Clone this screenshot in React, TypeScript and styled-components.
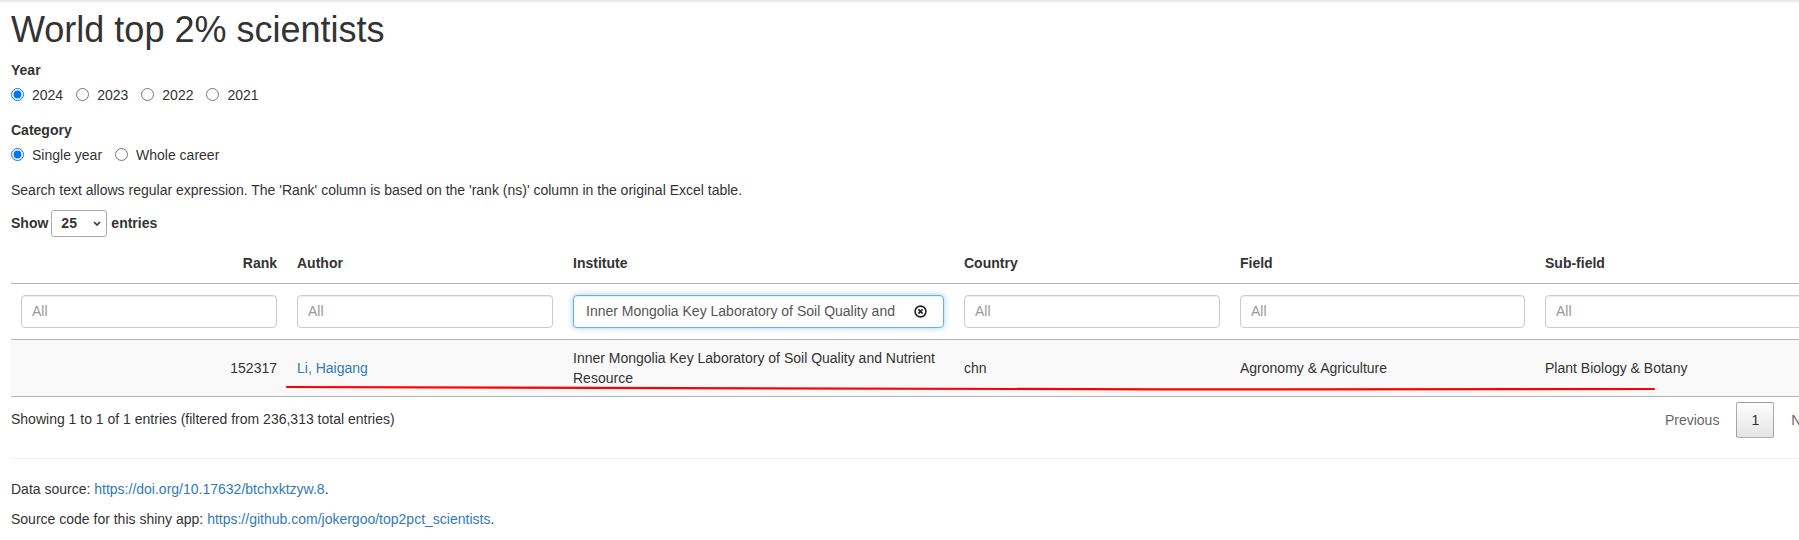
import styled, { createGlobalStyle } from "styled-components";

const GlobalStyle = createGlobalStyle`
  html, body {
    margin: 0;
    padding: 0;
    overflow: hidden;
  }

  body {
    font-family: "Liberation Sans", Arial, Helvetica, sans-serif;
    font-size: 14px;
    line-height: 20px;
    color: #333;
    background: #fff linear-gradient(#e6e6e6, #fff 4px) no-repeat;
  }
`;

const Page = styled.div`
  position: relative;
  width: 1824px;
  padding: 10px 0 0 11px;
`;

const Title = styled.h1`
  margin: 0 0 10px;
  font-size: 36px;
  font-weight: 500;
  line-height: 1.1;
`;

const FormGroup = styled.div`
  margin-bottom: 15px;
`;

const FieldLabel = styled.div`
  font-weight: bold;
  margin-bottom: 5px;
`;

const RadioRow = styled.div`
  display: flex;
  gap: 13px;
  height: 20px;
`;

const RadioOption = styled.label`
  display: inline-flex;
  align-items: center;
  gap: 8px;
`;

const RadioInput = styled.input`
  margin: 0;
  width: 13px;
  height: 13px;
`;

const Note = styled.p`
  margin: 0 0 10px;
`;

const LengthRow = styled.div`
  display: flex;
  align-items: center;
  height: 27px;
  margin-bottom: 6px;
  font-weight: bold;
`;

const SelectBox = styled.div`
  box-sizing: border-box;
  width: 56px;
  height: 27px;
  margin: 0 4px 0 3px;
  padding: 0 5px 0 9px;
  display: flex;
  align-items: center;
  justify-content: space-between;
  border: 1px solid #aaa;
  border-radius: 3px;
`;

const Table = styled.table`
  width: 1824px;
  border-collapse: collapse;
  table-layout: fixed;
`;

const HeadCell = styled.th<{ $align?: string }>`
  padding: 10px;
  text-align: ${(p) => p.$align || "left"};
  font-weight: bold;
  vertical-align: bottom;
  border-bottom: 1px solid #b3b3b3;
`;

const FilterCell = styled.td`
  padding: 11px 10px;
  border-bottom: 1px solid #b3b3b3;
`;

const FilterWrap = styled.div`
  position: relative;
`;

const FilterInput = styled.input<{ $focused?: boolean }>`
  box-sizing: border-box;
  display: block;
  width: 100%;
  height: 33px;
  margin: 0;
  padding: 0 30px 0 ${(p) => (p.$focused ? "12px" : "10px")};
  font-family: "Liberation Sans", Arial, sans-serif;
  font-size: 14px;
  color: #555;
  background: #fff;
  border: 1px solid ${(p) => (p.$focused ? "#66afe9" : "#ccc")};
  border-radius: 4px;
  outline: none;
  box-shadow: ${(p) =>
    p.$focused
      ? "inset 0 1px 1px rgba(0,0,0,.075), 0 0 6px rgba(102,175,233,.6)"
      : "inset 0 1px 1px rgba(0,0,0,.075)"};

  &::placeholder {
    color: #999;
  }
`;

const ClearIcon = styled.svg`
  position: absolute;
  right: 17px;
  top: 10px;
`;

const DataRow = styled.tr`
  background: #f9f9f9;
`;

const Cell = styled.td<{ $align?: string }>`
  padding: 8px 10px;
  vertical-align: middle;
  text-align: ${(p) => p.$align || "left"};
  border-bottom: 1px solid #b3b3b3;
`;

const Link = styled.a`
  color: #337ab7;
  text-decoration: none;
`;

const TableFooter = styled.div`
  display: flex;
  justify-content: space-between;
  align-items: flex-start;
`;

const Info = styled.div`
  padding-top: 12px;
`;

const Paging = styled.div`
  display: flex;
  padding-top: 5px;
`;

const PageButton = styled.span<{ $current?: boolean; $disabled?: boolean }>`
  box-sizing: border-box;
  min-width: 21px;
  margin-left: 2px;
  padding: 7px 14px;
  text-align: center;
  border: 1px solid ${(p) => (p.$current ? "rgba(0,0,0,0.3)" : "transparent")};
  border-radius: 2px;
  color: ${(p) => (p.$disabled ? "#666" : "#333")};
  background: ${(p) =>
    p.$current
      ? "linear-gradient(to bottom, #fdfdfd 0%, #e4e4e4 100%)"
      : "transparent"};
`;

const Rule = styled.hr`
  margin: 20px 0;
  border: 0;
  border-top: 1px solid #eee;
`;

const FooterText = styled.p`
  margin: 0 0 10px;
`;

const Annotation = styled.svg`
  position: absolute;
  left: 0;
  top: 0;
  pointer-events: none;
`;

const columns = [
  { key: "rank", title: "Rank", width: 276, align: "right" },
  { key: "author", title: "Author", width: 276 },
  { key: "institute", title: "Institute", width: 391 },
  { key: "country", title: "Country", width: 276 },
  { key: "field", title: "Field", width: 305 },
  { key: "subfield", title: "Sub-field", width: 300 },
];

const searchValue = "Inner Mongolia Key Laboratory of Soil Quality and";

function Radio({ label, checked }: { label: string; checked?: boolean }) {
  return (
    <RadioOption>
      <RadioInput type="radio" defaultChecked={checked} readOnly />
      <span>{label}</span>
    </RadioOption>
  );
}

const App: React.FC = () => {
  return (
    <Page>
      <GlobalStyle />
      <Title>World top 2% scientists</Title>

      <FormGroup>
        <FieldLabel>Year</FieldLabel>
        <RadioRow>
          <Radio label="2024" checked />
          <Radio label="2023" />
          <Radio label="2022" />
          <Radio label="2021" />
        </RadioRow>
      </FormGroup>

      <FormGroup>
        <FieldLabel>Category</FieldLabel>
        <RadioRow>
          <Radio label="Single year" checked />
          <Radio label="Whole career" />
        </RadioRow>
      </FormGroup>

      <Note>
        Search text allows regular expression. The 'Rank' column is based on
        the 'rank (ns)' column in the original Excel table.
      </Note>

      <LengthRow>
        Show
        <SelectBox>
          <span>25</span>
          <svg width="8" height="5" viewBox="0 0 8 5">
            <path d="M1 1 L4 4 L7 1" fill="none" stroke="#333" strokeWidth="1.6" />
          </svg>
        </SelectBox>
        entries
      </LengthRow>

      <Table>
        <colgroup>
          {columns.map((c) => (
            <col key={c.key} style={{ width: c.width }} />
          ))}
        </colgroup>
        <thead>
          <tr>
            {columns.map((c) => (
              <HeadCell key={c.key} $align={c.align}>
                {c.title}
              </HeadCell>
            ))}
          </tr>
          <tr>
            {columns.map((c) =>
              c.key === "institute" ? (
                <FilterCell key={c.key}>
                  <FilterWrap>
                    <FilterInput $focused defaultValue={searchValue} />
                    <ClearIcon width="13" height="13" viewBox="0 0 13 13">
                      <circle cx="6.5" cy="6.5" r="5.4" fill="none" stroke="#222" strokeWidth="1.6" />
                      <path d="M4.4 4.4 L8.6 8.6 M8.6 4.4 L4.4 8.6" stroke="#222" strokeWidth="1.6" />
                    </ClearIcon>
                  </FilterWrap>
                </FilterCell>
              ) : (
                <FilterCell key={c.key}>
                  <FilterInput placeholder="All" />
                </FilterCell>
              )
            )}
          </tr>
        </thead>
        <tbody>
          <DataRow>
            <Cell $align="right">152317</Cell>
            <Cell>
              <Link href="#">Li, Haigang</Link>
            </Cell>
            <Cell>
              Inner Mongolia Key Laboratory of Soil Quality and Nutrient
              Resource
            </Cell>
            <Cell>chn</Cell>
            <Cell>Agronomy &amp; Agriculture</Cell>
            <Cell>Plant Biology &amp; Botany</Cell>
          </DataRow>
        </tbody>
      </Table>

      <TableFooter>
        <Info>Showing 1 to 1 of 1 entries (filtered from 236,313 total entries)</Info>
        <Paging>
          <PageButton $disabled>Previous</PageButton>
          <PageButton $current>1</PageButton>
          <PageButton $disabled>Next</PageButton>
        </Paging>
      </TableFooter>

      <Rule />

      <FooterText>
        Data source:{" "}
        <Link href="#">https://doi.org/10.17632/btchxktzyw.8</Link>.
      </FooterText>
      <FooterText>
        Source code for this shiny app:{" "}
        <Link href="#">https://github.com/jokergoo/top2pct_scientists</Link>.
      </FooterText>

      <Annotation width="1799" height="540" viewBox="0 0 1799 540">
        <path
          d="M287 387 C 600 389, 1200 390, 1654 389"
          fill="none"
          stroke="#ff0000"
          strokeWidth="2.2"
          strokeLinecap="round"
        />
      </Annotation>
    </Page>
  );
};

export default App;
